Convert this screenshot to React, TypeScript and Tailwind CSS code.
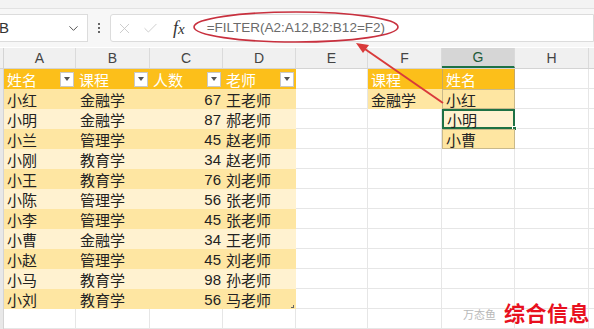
import { ChevronDown, X, Check } from "lucide-react";

// Table data
const rows = [
  ["小红", "金融学", "67", "王老师"],
  ["小明", "金融学", "87", "郝老师"],
  ["小兰", "管理学", "45", "赵老师"],
  ["小刚", "教育学", "34", "赵老师"],
  ["小王", "教育学", "76", "刘老师"],
  ["小陈", "管理学", "56", "张老师"],
  ["小李", "管理学", "45", "张老师"],
  ["小曹", "金融学", "34", "王老师"],
  ["小赵", "管理学", "45", "刘老师"],
  ["小马", "教育学", "98", "孙老师"],
  ["小刘", "教育学", "56", "马老师"],
];

const widths = ["w-[72px]", "w-[74px]", "w-[73px]", "w-[73px]", "w-[72px]", "w-[74px]", "w-[73px]", "w-[74px]"];
const letters = ["A", "B", "C", "D", "E", "F", "G", "H"];
const results = ["小红", "小明", "小曹"];

const HeaderCell = ({ text, w }: { text: string; w: string }) => (
  <div className={`${w} h-full bg-[#fcbf1a] flex items-center justify-between pl-[3px] pr-[2px] text-white`}>
    <span>{text}</span>
    <span className="w-[14px] h-[15px] bg-white border border-[#c8c8c8] flex items-center justify-center">
      <span className="block w-0 h-0 border-l-[3px] border-r-[3px] border-t-[4px] border-l-transparent border-r-transparent border-t-[#555]" />
    </span>
  </div>
);

const Empty = ({ w }: { w: string }) => (
  <div className={`${w} h-full border-r border-b border-[#e6e6e6] bg-white`} />
);

export default function App() {
  return (
    <div
      className="relative w-[594px] h-[329px] overflow-hidden bg-white text-[#222]"
      style={{ fontFamily: '"Liberation Sans", "Noto Sans CJK SC", sans-serif' }}
    >
      {/* Ribbon strip (cut off) */}
      <div className="h-[9px] bg-[#f3f3f3] border-b border-[#e2e2e2]" />

      {/* Formula bar */}
      <div className="h-[38px] bg-[#f7f7f7] flex items-center">
        <div className="w-[92px] h-[28px] bg-white border border-[#dcdcdc] flex items-center justify-between pr-[6px] -ml-[4px] pl-[2px] text-[15px] text-[#333]">
          <span>B</span>
          <ChevronDown size={15} strokeWidth={1.6} className="text-[#555]" />
        </div>
        <div className="w-[22px] flex flex-col items-center gap-[2px]">
          <span className="w-[2px] h-[2px] bg-[#666]" />
          <span className="w-[2px] h-[2px] bg-[#666]" />
          <span className="w-[2px] h-[2px] bg-[#666]" />
        </div>
        <div className="flex-1 h-[28px] bg-white border border-[#dcdcdc] rounded-l-[3px] flex items-center">
          <X size={17} strokeWidth={1.2} className="text-[#c4c4c4] ml-[5px]" />
          <Check size={17} strokeWidth={1.2} className="text-[#c4c4c4] ml-[9px]" />
          <span className="ml-[14px] text-[18px] italic text-[#333]" style={{ fontFamily: '"Liberation Serif", serif' }}>
            f<span className="text-[15px]">x</span>
          </span>
          <span className="ml-[22px] text-[13.5px] text-[#6a6a6a]">=FILTER(A2:A12,B2:B12=F2)</span>
        </div>
      </div>

      {/* Column headers */}
      <div className="h-[21px] flex bg-[#f0f0f0] border-b border-[#d4d4d4] text-[14px] text-[#444] mt-[1px]">
        <div className="w-[4px] border-r border-[#d4d4d4]" />
        {letters.map((l, i) => (
          <div
            key={l}
            className={`${widths[i]} flex items-center justify-center border-r border-[#dadada] ${
              l === "G" ? "bg-[#d6d6d6] border-b-2 border-b-[#1e7145] text-[#1e5b3a]" : ""
            }`}
          >
            {l}
          </div>
        ))}
        <div className="flex-1" />
      </div>

      {/* Grid */}
      <div className="text-[15px]" style={{ fontFamily: '"Noto Sans CJK SC", "Liberation Sans", sans-serif' }}>
        {/* Row 1: table header */}
        <div className="h-[20px] flex leading-none">
          <div className="w-[4px] bg-[#e8e8e8] border-r border-[#d4d4d4]" />
          <HeaderCell text="姓名" w={widths[0]} />
          <HeaderCell text="课程" w={widths[1]} />
          <HeaderCell text="人数" w={widths[2]} />
          <HeaderCell text="老师" w={widths[3]} />
          <Empty w={widths[4]} />
          <div className={`${widths[5]} h-full bg-[#fcbf1a] text-white flex items-center pl-[3px]`}>课程</div>
          <div className={`${widths[6]} h-full bg-[#fcbf1a] text-white flex items-center pl-[3px] border-l border-r border-[#c9a860]`}>姓名</div>
          <Empty w={widths[7]} />
          <div className="flex-1 border-b border-[#e6e6e6]" />
        </div>

        {/* Data rows */}
        {[...rows, null].map((r, i) => {
          const band = i % 2 === 0 ? "bg-[#fee6a2]" : "bg-[#fff2d0]";
          const res = results[i];
          return (
            <div key={i} className="h-[20px] flex leading-none">
              <div className="w-[4px] bg-[#e8e8e8] border-r border-[#d4d4d4]" />
              {r ? (
                <>
                  <div className={`${widths[0]} ${band} flex items-center pl-[3px]`}>{r[0]}</div>
                  <div className={`${widths[1]} ${band} flex items-center pl-[4px]`}>{r[1]}</div>
                  <div className={`${widths[2]} ${band} flex items-center justify-end pr-[2px]`} style={{ fontFamily: '"Liberation Sans", sans-serif' }}>
                    {r[2]}
                  </div>
                  <div className={`${widths[3]} ${band} flex items-center pl-[3px] relative`}>
                    {r[3]}
                    {i === 10 && <span className="absolute right-[2px] bottom-[1px] w-[3px] h-[3px] border-r border-b border-[#666]" />}
                  </div>
                </>
              ) : (
                <>
                  <Empty w={widths[0]} />
                  <Empty w={widths[1]} />
                  <Empty w={widths[2]} />
                  <Empty w={widths[3]} />
                </>
              )}
              <Empty w={widths[4]} />
              {i === 0 ? (
                <div className={`${widths[5]} bg-[#fee6a2] flex items-center pl-[3px]`}>金融学</div>
              ) : (
                <Empty w={widths[5]} />
              )}
              {res ? (
                <div
                  className={`${widths[6]} relative flex items-center pl-[3px] ${
                    i === 1 ? "bg-[#fff2d0] border-2 border-[#1e7145] pl-[2px]" : "bg-[#fee6a2] border border-[#c9b98a]"
                  }`}
                >
                  {res}
                  {i === 1 && <span className="absolute -right-[4px] -bottom-[4px] w-[5px] h-[5px] bg-[#1e7145] border border-white" />}
                </div>
              ) : (
                <Empty w={widths[6]} />
              )}
              <Empty w={widths[7]} />
              <div className="flex-1 border-b border-[#e6e6e6]" />
            </div>
          );
        })}
      </div>

      {/* Red annotation: ellipse and arrow */}
      <svg className="absolute left-0 top-0 pointer-events-none" width="594" height="329">
        <ellipse cx="296" cy="27" rx="102" ry="15" fill="none" stroke="#c8303e" strokeWidth="1.6" />
        <line x1="443" y1="103" x2="362" y2="47" stroke="#d93a3a" strokeWidth="2" />
        <path d="M356 43 L369 45 L363 53 Z" fill="#d93a3a" />
      </svg>

      {/* Watermark */}
      <div className="absolute right-[4px] bottom-[6px] flex items-end gap-[8px]">
        <span className="text-[11px] text-[#b8b8b8] mb-[1px]" style={{ fontFamily: '"Noto Sans CJK SC", sans-serif' }}>
          万态鱼
        </span>
        <span
          className="text-[21px] font-bold text-[#e8101e] leading-none tracking-[0.5px]"
          style={{ fontFamily: '"Noto Sans CJK SC", sans-serif' }}
        >
          综合信息
        </span>
      </div>
    </div>
  );
}
